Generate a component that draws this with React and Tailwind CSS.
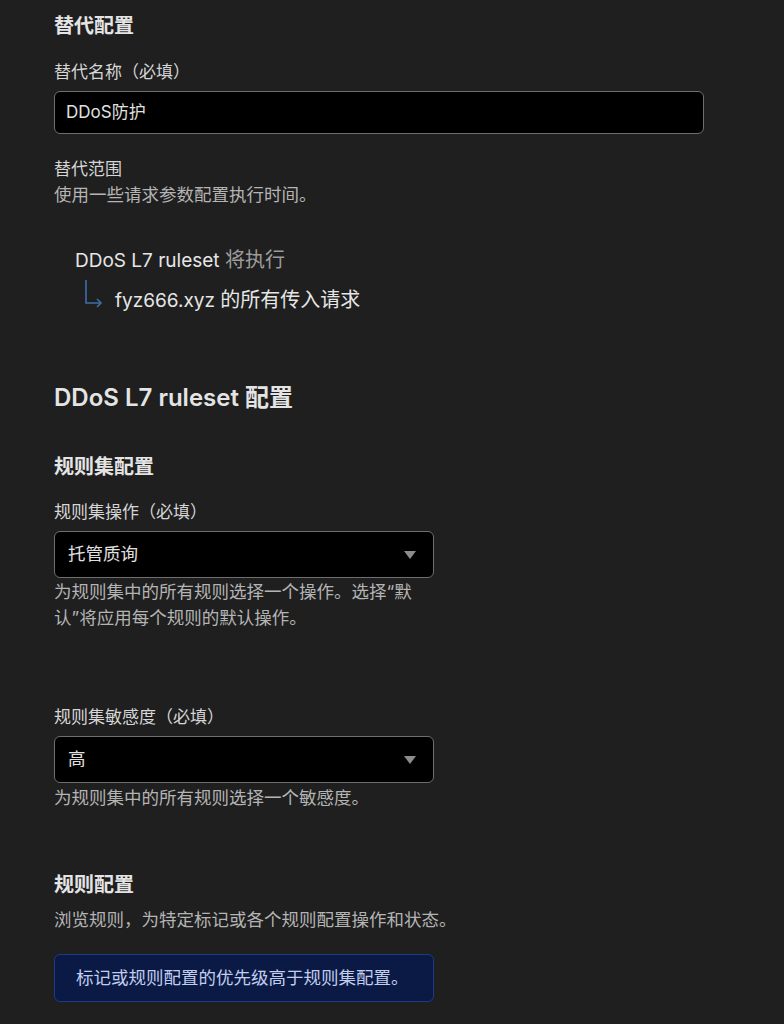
export default function App() {
  const font = { fontFamily: '"Inter", "Noto Sans CJK SC", sans-serif' }

  const Caret = () => (
    <svg width="12" height="8" viewBox="0 0 12 8" className="shrink-0">
      <path d="M0 0 L12 0 L6 8 Z" fill="#8c8c8c" />
    </svg>
  )

  return (
    <div className="min-h-[1024px] w-[784px] bg-[#1f1f1f] px-[54px] pt-[12px] text-[#dcdcdc]" style={font}>
      {/* Override config */}
      <h2 className="text-[20px] leading-[28px] font-semibold text-[#e4e4e4]">替代配置</h2>
      <div className="mt-[20px] text-[17px] leading-[24px] text-[#d6d6d6]">替代名称（必填）</div>
      <div className="mt-[7px] flex h-[43px] w-[650px] items-center rounded-[6px] border border-[#6e6e6e] bg-black px-[11px] text-[17px] text-[#e0e0e0]">
        DDoS防护
      </div>

      <div className="mt-[22px] text-[17px] leading-[26px] text-[#d6d6d6]">替代范围</div>
      <div className="text-[17.5px] leading-[26px] text-[#b4b4b4]">使用一些请求参数配置执行时间。</div>

      <div className="mt-[32px] ml-[21px]">
        <div className="h-[40px] text-[19px] leading-[40px] text-[#e6e6e6]">
          DDoS L7 ruleset <span className="text-[20px] leading-[40px] text-[#9c9c9c]">将执行</span>
        </div>
        <div className="flex h-[40px] items-center">
          <svg width="40" height="40" viewBox="0 0 40 40" className="shrink-0">
            <path d="M11 0 V23 H26" fill="none" stroke="#3d6fa8" strokeWidth="1.6" />
            <path d="M22 19 L26 23 L22 27" fill="none" stroke="#3d6fa8" strokeWidth="1.6" />
          </svg>
          <span className="text-[19px] leading-[40px] text-[#e6e6e6]">
            fyz666.xyz <span className="text-[20px] leading-[40px]">的所有传入请求</span>
          </span>
        </div>
      </div>

      <h1 className="mt-[62px] text-[24px] leading-[32px] font-semibold text-[#e4e4e4]">DDoS L7 ruleset 配置</h1>

      {/* Ruleset config */}
      <h2 className="mt-[39px] text-[20px] leading-[28px] font-semibold text-[#e4e4e4]">规则集配置</h2>
      <div className="mt-[19px] text-[17px] leading-[24px] text-[#d6d6d6]">规则集操作（必填）</div>
      <div className="mt-[7px] flex h-[47px] w-[380px] items-center justify-between rounded-[6px] border border-[#6e6e6e] bg-black pl-[13px] pr-[17px] text-[17.5px] text-[#e0e0e0]">
        <span>托管质询</span>
        <Caret />
      </div>
      <div className="mt-[1px] w-[380px] text-[17.5px] leading-[26px] text-[#b4b4b4]">
        为规则集中的所有规则选择一个操作。选择“默认”将应用每个规则的默认操作。
      </div>

      <div className="mt-[74px] text-[17px] leading-[24px] text-[#d6d6d6]">规则集敏感度（必填）</div>
      <div className="mt-[7px] flex h-[47px] w-[380px] items-center justify-between rounded-[6px] border border-[#6e6e6e] bg-black pl-[13px] pr-[17px] text-[17.5px] text-[#e0e0e0]">
        <span>高</span>
        <Caret />
      </div>
      <div className="mt-[2px] text-[17.5px] leading-[26px] text-[#b4b4b4]">为规则集中的所有规则选择一个敏感度。</div>

      {/* Rule config */}
      <h2 className="mt-[60px] text-[20px] leading-[28px] font-semibold text-[#e4e4e4]">规则配置</h2>
      <div className="mt-[8px] text-[17.5px] leading-[26px] text-[#b4b4b4]">浏览规则，为特定标记或各个规则配置操作和状态。</div>
      <div className="mt-[21px] flex h-[48px] w-[380px] items-center rounded-[6px] border border-[#1e3a86] bg-[#0a1a45] px-[21px] text-[17.5px] text-[#c2cdee]">
        标记或规则配置的优先级高于规则集配置。
      </div>
    </div>
  )
}
